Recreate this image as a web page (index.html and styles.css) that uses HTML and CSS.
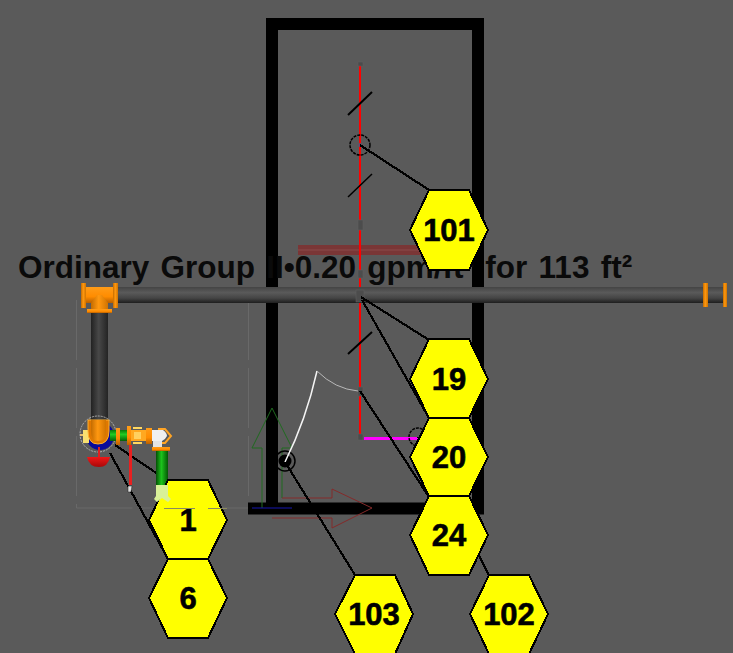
FILE: index.html
```html
<!DOCTYPE html>
<html lang="en">
<head>
<meta charset="utf-8">
<title>Sprinkler system isometric</title>
<link rel="stylesheet" href="styles.css">
</head>
<body>
<svg class="canvas" width="733" height="653" viewBox="0 0 733 653" xmlns="http://www.w3.org/2000/svg">
  <defs>
    <linearGradient id="pipeH" x1="0" y1="0" x2="0" y2="1">
      <stop offset="0" stop-color="#444"/><stop offset="0.35" stop-color="#5a5a5a"/><stop offset="0.7" stop-color="#444"/><stop offset="1" stop-color="#1e1e1e"/>
    </linearGradient>
    <linearGradient id="pipeV" x1="0" y1="0" x2="1" y2="0">
      <stop offset="0" stop-color="#222"/><stop offset="0.45" stop-color="#484848"/><stop offset="1" stop-color="#242424"/>
    </linearGradient>
    <linearGradient id="orangeH" x1="0" y1="0" x2="0" y2="1">
      <stop offset="0" stop-color="#ff9c18"/><stop offset="0.6" stop-color="#ff8c00"/><stop offset="1" stop-color="#b86000"/>
    </linearGradient>
    <linearGradient id="orangeV" x1="0" y1="0" x2="1" y2="0">
      <stop offset="0" stop-color="#c46c00"/><stop offset="0.45" stop-color="#ff9810"/><stop offset="1" stop-color="#d07400"/>
    </linearGradient>
    <linearGradient id="greenH" x1="0" y1="0" x2="0" y2="1">
      <stop offset="0" stop-color="#0a7a0a"/><stop offset="0.4" stop-color="#22cc22"/><stop offset="1" stop-color="#066006"/>
    </linearGradient>
    <linearGradient id="greenV" x1="0" y1="0" x2="1" y2="0">
      <stop offset="0" stop-color="#045004"/><stop offset="0.45" stop-color="#1cc41c"/><stop offset="1" stop-color="#045804"/>
    </linearGradient>
    <linearGradient id="dome" x1="0" y1="0" x2="0" y2="1">
      <stop offset="0" stop-color="#f01818"/><stop offset="1" stop-color="#a80808"/>
    </linearGradient>
  </defs>

  <!-- faint sketch lines -->
  <path class="faint" d="M76.500 300V508H248M248.500 300V508"/>

  <!-- building outline -->
  <path class="wall" d="M272 508V24H478V514M248 508.500H484"/>
  <rect class="beam" x="298" y="245" width="127" height="10"/>
  <line class="beam-line" x1="298" y1="250" x2="425" y2="250"/>

  <!-- note -->
  <text class="note" x="18" y="278">Ordinary Group II•0.20 gpm/ft² for 113 ft²</text>

  <!-- transform gizmo -->
  <path class="giz-g" d="M262 508V448H252L272 408L292 448H282V498"/>
  <path class="giz-r" d="M282 498H332V489L372 508L332 528V518H272"/>
  <line class="giz-b" x1="252" y1="508" x2="292" y2="508"/>

  <!-- riser -->
  <line class="red" x1="360" y1="62" x2="360" y2="438"/>
  <line class="magenta" x1="364" y1="438" x2="418" y2="438"/>
  <path class="tick" d="M348 115L372 92"/>
  <path class="tick thin" d="M348 197L372 174"/>
  <path class="tick" d="M348 354L372 332"/>
  <circle class="ring" cx="360" cy="145" r="10"/>
  <circle class="pin" cx="360" cy="145" r="2"/>
  <circle class="ring" cx="418" cy="437" r="9"/>
  <rect class="node" x="358" y="62" width="5" height="4"/>
  <rect class="node" x="358" y="220" width="5" height="10"/>
  <rect class="node" x="358" y="270" width="5" height="8"/>
  <rect class="node" x="358" y="387" width="5" height="9"/>
  <rect class="node" x="358" y="434" width="5" height="6"/>

  <!-- branch lines and head -->
  <circle class="ring solid" cx="285" cy="461" r="10"/>
  <circle class="dot" cx="285" cy="461" r="6.500"/>
  <path class="white" d="M285 462Q306 420 317 371"/>
  <path class="white soft" d="M317 371Q335 389 358 391"/>

  <!-- main pipe -->
  <rect x="112" y="287" width="615" height="16" fill="url(#pipeH)"/>
  <rect x="91" y="310" width="17" height="112" fill="url(#pipeV)"/>
  <rect class="node" x="356" y="290" width="8" height="12"/>
  <rect x="703" y="283" width="5" height="24" fill="url(#orangeV)"/>
  <rect x="723" y="283" width="4" height="24" fill="url(#orangeV)"/>

  <!-- tee -->
  <rect x="85" y="287" width="30" height="16" fill="url(#orangeH)"/>
  <path fill="url(#orangeV)" d="M91 310V303L97 295H102L108 303V310Z"/>
  <rect x="81" y="283" width="5" height="25" fill="url(#orangeV)"/>
  <rect x="113" y="283" width="5" height="25" fill="url(#orangeV)"/>
  <rect x="87" y="309" width="25" height="4" fill="url(#orangeH)"/>

  <!-- leaders that run behind the valve -->
  <g class="leaders">
    <path d="M360 145L429 190"/>
    <path d="M361 297L429 340"/>
    <path d="M362 300L429 418"/>
    <path d="M360 391L429 497"/>
    <path d="M285 462L355 575"/>
    <path d="M418 437L489 575"/>
    <path d="M115 445L168 481"/>
    <path d="M110 453L168 559"/>
  </g>

  <!-- valve assembly -->
  <circle class="halo" cx="98" cy="434" r="18"/>
  <circle cx="100" cy="436" r="14" fill="#0a0a9a"/>
  <rect x="80" y="434" width="4" height="2" fill="#e8c070"/>
  <rect x="83" y="430" width="6" height="13" fill="#f8e070"/>
  <path fill="#e07800" stroke="#ffb030" d="M88 420H109V431Q109 444 98 444Q88 444 88 431Z"/>
  <path fill="url(#orangeV)" d="M91 420H106V431Q106 441 98 441Q91 441 91 431Z"/>
  <rect x="98" y="447" width="2" height="10" fill="#e02020"/>
  <path fill="url(#dome)" d="M87 457H110Q108 467 99 467Q89 467 87 457Z"/>
  <rect x="110" y="430" width="20" height="11" fill="url(#greenH)"/>
  <rect x="116" y="428" width="4" height="17" fill="url(#orangeH)"/>
  <rect x="127" y="426" width="4" height="19" fill="url(#orangeH)"/>
  <rect x="131" y="430" width="16" height="11" fill="#ffa820"/>
  <rect x="134" y="432" width="7" height="7" fill="#ffd060"/>
  <rect x="133" y="427" width="9" height="2" fill="#ffd860"/>
  <rect x="133" y="442" width="9" height="2" fill="#ffd860"/>
  <rect x="146" y="428" width="6" height="16" fill="url(#orangeH)"/>
  <path fill="none" stroke="#ffa424" stroke-width="2" d="M158 429H165L171 436L165 443H160"/>
  <path fill="#f0f0f0" d="M152 430H163Q167 433 167 436Q165 440 162 441H152Z"/>
  <rect x="153" y="441" width="9" height="6" fill="#e4e4e4"/>
  <rect x="152" y="447" width="18" height="4" fill="url(#orangeH)"/>
  <rect x="156" y="451" width="12" height="34" fill="url(#greenV)"/>
  <rect x="129" y="445" width="3" height="40" fill="#e82020"/>
  <path fill="#e0e0e0" stroke="#222" stroke-width="0.500" d="M128 486H132L131 492H128Z"/>

  <!-- callouts -->
  <g class="tag"><path d="M429 190H469L488 230L469 270H429L410 230Z"/><text x="449" y="241">101</text></g>
  <g class="tag"><path d="M429 339H469L488 379L469 418H429L410 379Z"/><text x="449" y="390">19</text></g>
  <g class="tag"><path d="M429 418H469L488 457L469 496H429L410 457Z"/><text x="449" y="468">20</text></g>
  <g class="tag"><path d="M429 496H469L488 535L469 575H429L410 535Z"/><text x="449" y="546">24</text></g>
  <g class="tag"><path d="M168 480H208L227 520L208 559H168L149 520Z"/><text x="188" y="531">1</text></g>
  <g class="tag"><path d="M168 559H208L227 598L208 638H168L149 598Z"/><text x="188" y="609">6</text></g>
  <g class="tag"><path d="M355 575H395L413 614L395 654H355L335 614Z"/><text x="374" y="625">103</text></g>
  <g class="tag"><path d="M489 575H529L548 614L529 654H489L470 614Z"/><text x="509" y="625">102</text></g>
  <path class="faint on-tag" d="M164 508.500H227"/>

  <!-- sprinkler head sits over callout 1 -->
  <path fill="#d8f098" d="M156 485H168L168 496L171 499L168 502L162 498L157 502L154 499L156 496Z"/>
</svg>
</body>
</html>
```
FILE: styles.css
```css
html, body {
  margin: 0;
  padding: 0;
  background: #5a5a5a;
}
.canvas { display: block; }
.faint { fill: none; stroke: #696969; stroke-width: 1; stroke-dasharray: 60 8; }
.faint.on-tag { stroke: #8a8a60; stroke-dasharray: 31 13; }
.wall { fill: none; stroke: #000; stroke-width: 12; }
.beam { fill: #7a3636; }
.beam-line { stroke: #8a4a4a; stroke-width: 1; }
.note {
  font-family: "Liberation Sans", Arial, sans-serif;
  font-weight: 700;
  font-size: 31.500px;
  word-spacing: 2.500px;
  fill: #0a0a0a;
}
.giz-g, .giz-r { fill: none; stroke-width: 1; }
.giz-g { stroke: #1f6a1f; }
.giz-r { stroke: #842a2a; }
.giz-b { stroke: #1616b0; stroke-width: 1; }
.red { stroke: #ff0000; stroke-width: 2; shape-rendering: crispEdges; }
.magenta { stroke: #ff00ff; stroke-width: 3; shape-rendering: crispEdges; }
.tick { stroke: #000; stroke-width: 2; fill: none; }
.tick.thin { stroke-width: 1.500; }
.ring { fill: none; stroke: #000; stroke-width: 1.500; stroke-dasharray: 3 1; }
.ring.solid { stroke-dasharray: none; }
.pin { fill: #6a4a6a; }
.dot { fill: #000; }
.node { fill: #4c4c4c; stroke: #606060; stroke-width: 0.500; }
.white { fill: none; stroke: #f4f4f4; stroke-width: 1.500; }
.white.soft { stroke: #b8b8b8; stroke-width: 1; }
.halo { fill: none; stroke: #b0b0b0; stroke-width: 1; stroke-dasharray: 2 1; }
.leaders path { fill: none; stroke: #000; stroke-width: 2.200; shape-rendering: crispEdges; }
.tag path { fill: #ffff00; stroke: #000; stroke-width: 2; shape-rendering: crispEdges; }
.tag text {
  font-family: "Liberation Sans", Arial, sans-serif;
  font-weight: 700;
  font-size: 31px;
  fill: #000;
  stroke: #000;
  stroke-width: 0.600;
  text-anchor: middle;
}
```
